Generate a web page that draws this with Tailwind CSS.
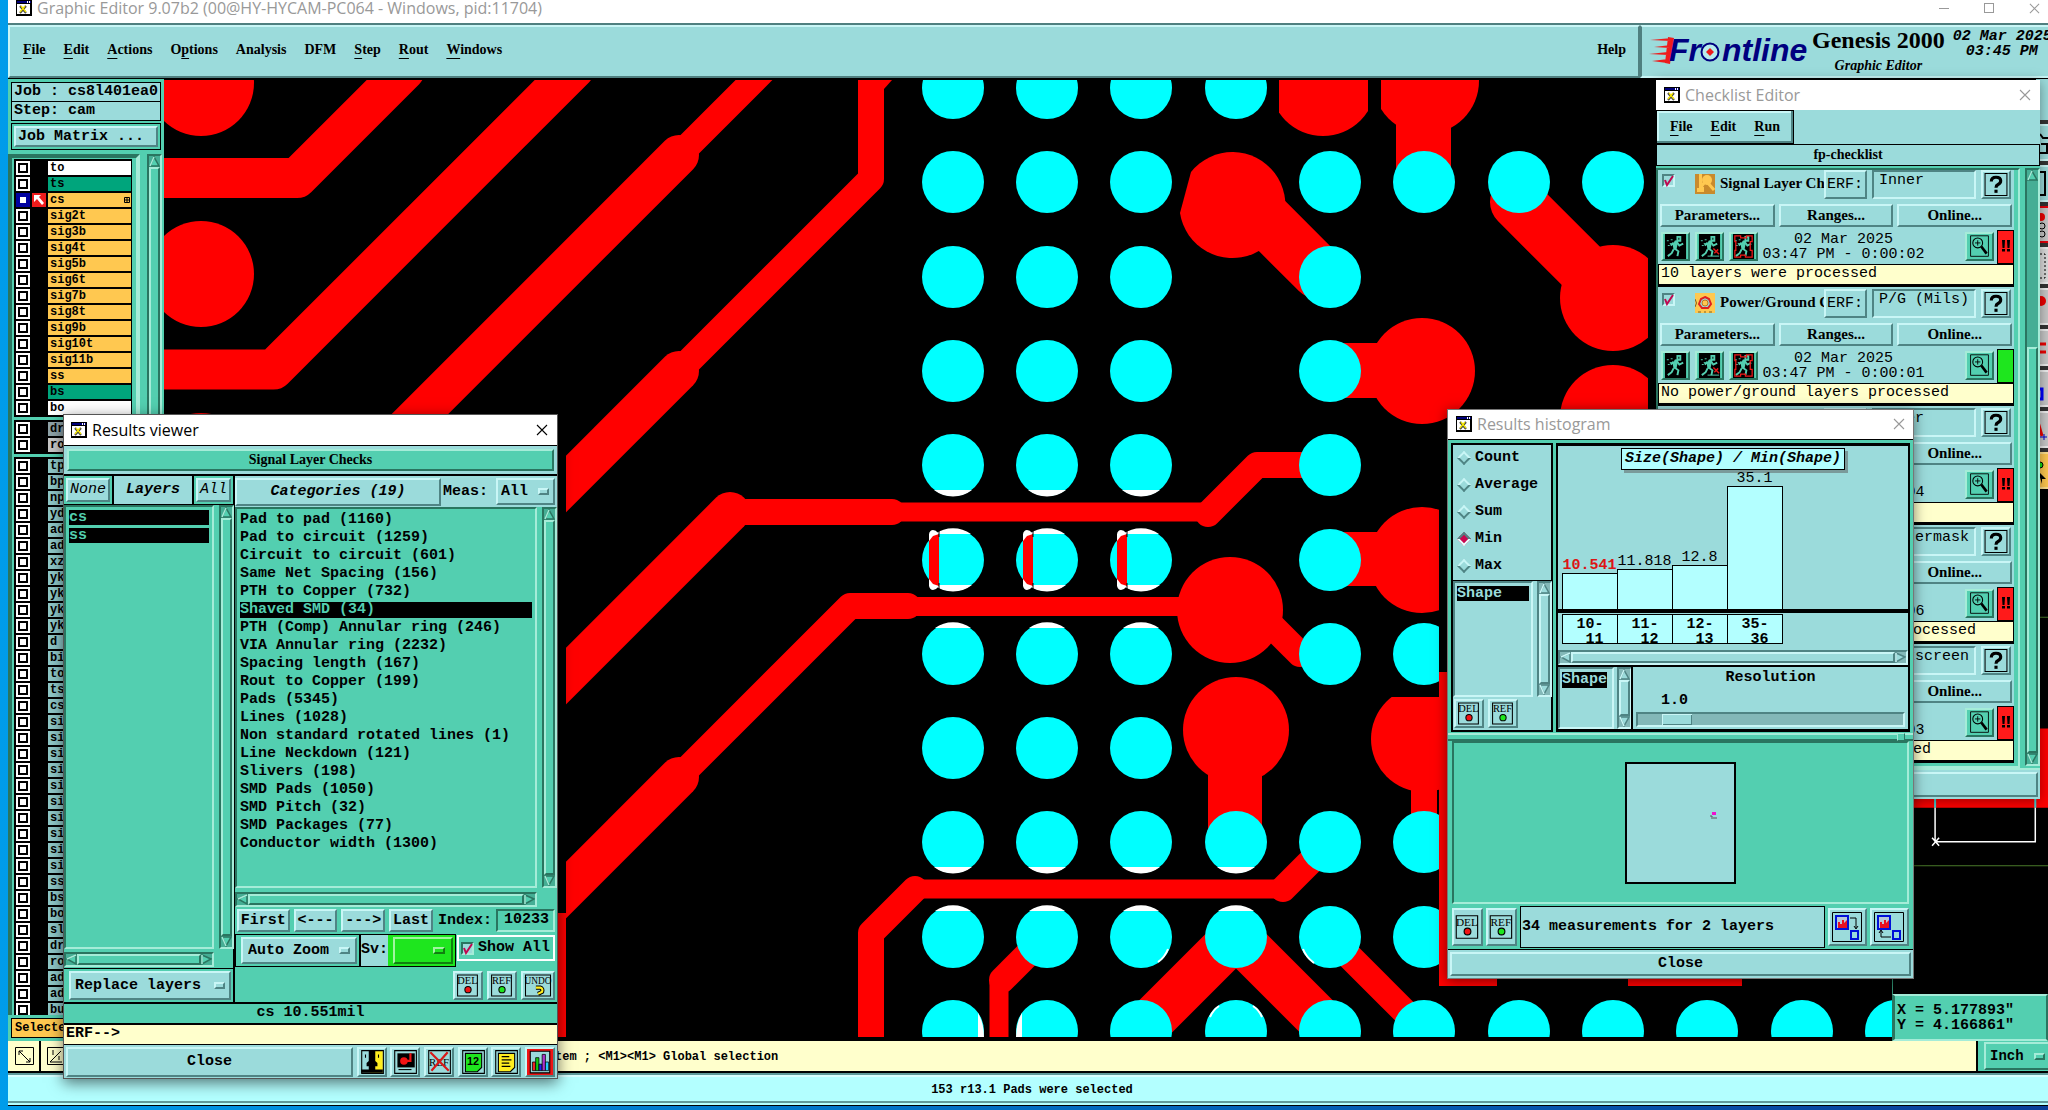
<!DOCTYPE html>
<html lang="en">
<head>
  <meta charset="UTF-8" />
  <meta name="viewport" content="width=device-width, initial-scale=1.0" />
  <title>Graphic Editor 9.07b2</title>
  <script src="https://cdn.jsdelivr.net/npm/@tailwindcss/browser@4"></script>
</head>
<body class="relative h-screen overflow-hidden bg-linear-to-r from-[#009cea] to-[#0a3f9a] font-['Liberation_Mono',monospace] text-[15px] leading-[18px] font-bold text-black">

  <!-- shared icons -->
  <svg class="hidden">
    <symbol id="app" viewBox="0 0 16 16">
      <path d="M0 0h16v16H0z" fill="#000"/><path d="M1 4h13v10H1z" fill="#fff"/><path d="M1 1h14v2H1z" fill="#00007b"/><path d="M11 1h1v2h-1zM13 1h1v2h-1z" fill="#fff"/>
      <path d="M4 6l6 7M10 6l-6 7" stroke="#444" stroke-width="2"/><path d="M5 6l5 6M9 6l-5 6" stroke="#f5e600" stroke-width="1.300"/>
    </symbol>
    <symbol id="close" viewBox="0 0 12 12"><path d="M1 1l10 10M11 1L1 11" fill="none" stroke="currentColor" stroke-width="1.100"/></symbol>
    <symbol id="del" viewBox="0 0 24 24">
      <path d="M2 2h19v20H2z" fill="none" stroke="#000"/>
      <text x="11.500" y="11" text-anchor="middle" font-family="Liberation Serif" font-size="10" font-weight="400">DEL</text>
      <circle cx="12" cy="16" r="3" fill="#f01414" stroke="#000"/>
    </symbol>
    <symbol id="ref" viewBox="0 0 24 24">
      <path d="M2 2h19v20H2z" fill="none" stroke="#000"/>
      <text x="11.500" y="11" text-anchor="middle" font-family="Liberation Serif" font-size="10" font-weight="400">REF</text>
      <circle cx="12" cy="16" r="3" fill="#1ee61e" stroke="#000"/>
    </symbol>
    <symbol id="undo" viewBox="0 0 28 24">
      <path d="M2 2h24v20H2z" fill="none" stroke="#000"/>
      <text x="14" y="11" text-anchor="middle" font-family="Liberation Serif" font-size="9" font-weight="400">UNDO</text>
      <path d="M12 14h4q3 1 2 4l-4 2" fill="none" stroke="#000" stroke-width="4"/><path d="M12 14h4q3 1 2 4l-4 2" fill="none" stroke="#ffee20" stroke-width="2"/>
    </symbol>
    <symbol id="person" viewBox="0 0 22 26">
      <path d="M13 3h3v4h-3zM12 7l-3 4 1 5M12 8l3 4 4-2M9 9L6 12M10 15l4 3-1 5M9 16l-2 4-4 3" fill="none" stroke="#53cfb0" stroke-width="2"/>
      <path d="M10 7h4l-2 9H9z" fill="#53cfb0"/><path d="M2 7h2M5 10h2M3 12h2M6 6h2" stroke="#53cfb0"/>
    </symbol>
    <symbol id="run" viewBox="0 0 22 26"><path d="M0 0h22v26H0z"/><use href="#person"/></symbol>
    <symbol id="run-sel" viewBox="0 0 22 26"><path d="M0 0h22v26H0z"/><use href="#person"/><path d="M9 23h12" stroke="#53cfb0"/><path d="M15 15l6 6M20 16l-4 4" stroke="#e01818" stroke-width="1.500"/></symbol>
    <symbol id="run-area" viewBox="0 0 22 26"><path d="M0 0h22v26H0z"/><use href="#person"/><path d="M2 2h6v2h6V2h6v6h-2v9h2v7h-7v-2H8v2H2v-7h1V8H2z" fill="none" stroke="#f01818" stroke-width="1.300"/></symbol>
    <symbol id="zoom" viewBox="0 0 24 28">
      <path d="M2 2h20v23H2z" fill="none" stroke="#000"/><circle cx="10" cy="10" r="5.500" fill="none" stroke="#000" stroke-width="1.200"/>
      <path d="M7 10h6M10 7v6" stroke="#000"/><path d="M14 14l6 8" stroke="#000" stroke-width="3"/>
    </symbol>
    <symbol id="help" viewBox="0 0 24 24">
      <path d="M1.500 1.500h21v21h-21z" fill="none" stroke="#000"/>
      <path d="M7.500 9q0-4 4.500-4t4.500 3.500q0 2.500-2.500 3.500-2 1-2 3" fill="none" stroke="#000" stroke-width="3"/><path d="M10.500 17h3v3h-3z"/>
    </symbol>
    <symbol id="signal" viewBox="0 0 20 20">
      <path d="M0 0h20v20H0z" fill="#c98a2c"/><path d="M4 0h3v13h2v5H2v-4h2z" fill="#ffc850"/><path d="M9 9l-3 4M13 9l6 7" stroke="#ffc850" stroke-width="3"/><circle cx="12" cy="6" r="5" fill="#ffc850"/>
    </symbol>
    <symbol id="ground" viewBox="0 0 20 20">
      <path d="M0 0h20v20H0z" fill="#ffc850"/><path d="M10 4l4 2 2 5-3 4H7l-3-4 2-5z" fill="#9bdbdb" stroke="#e02020" stroke-width="2"/><circle cx="10" cy="10" r="3" fill="#ffc850" stroke="#c07820"/>
      <path d="M0 6q3 4 0 8M3 19h3M14 19h3M9 19h2" fill="none" stroke="#806020"/>
    </symbol>
  </svg>

  <!-- main editor window -->
  <div class="flex h-full flex-col pb-[4px] pl-[8px]">
    <header class="flex h-[23px] shrink-0 items-center bg-white pr-[8px] pb-[7px] pl-[8px] font-['Open_Sans',sans-serif] text-[16px] font-normal text-[#999]">
      <svg class="size-[16px]"><use href="#app"/></svg>
      <h1 class="ml-[5px] flex-1">Graphic Editor 9.07b2 (00@HY-HYCAM-PC064 - Windows, pid:11704)</h1>
      <button aria-label="Minimize" class="mr-[35px] h-px w-[10px] bg-[#999]"></button>
      <button aria-label="Maximize" class="mr-[35px] size-[10px] border border-[#999]"></button>
      <button aria-label="Close"><svg class="size-[11px]"><use href="#close"/></svg></button>
    </header>

    <div class="flex h-[56px] shrink-0 border-t-2 border-b border-t-[#4f7f7f] border-b-black bg-[#9bdbdb] font-['Liberation_Serif',serif] text-[14px]">
      <nav class="flex flex-1 items-center gap-[18px] border-2 pr-[12px] pb-[3px] pl-[13px] [border-color:#c9f6f6_#4f7f7f_#4f7f7f_#c9f6f6]">
        <button><span class="underline underline-offset-4">F</span>ile</button>
        <button><span class="underline underline-offset-4">E</span>dit</button>
        <button><span class="underline underline-offset-4">A</span>ctions</button>
        <button>O<span class="underline underline-offset-4">p</span>tions</button>
        <button>Analysis</button>
        <button>DFM</button>
        <button><span class="underline underline-offset-4">S</span>tep</button>
        <button><span class="underline underline-offset-4">R</span>out</button>
        <button><span class="underline underline-offset-4">W</span>indows</button>
        <button class="ml-auto">Help</button>
      </nav>
      <div class="flex w-[408px] shrink-0 gap-[6px] overflow-hidden border-2 border-r-0 [border-color:#c9f6f6_#c9f6f6_#c9f6f6_#4f7f7f]">
        <svg class="ml-[6px] h-[50px] w-[160px] shrink-0" viewBox="0 0 160 50">
          <path d="M2 13l22-2-1 3zM6 20l17-2-1 3zM1 27l19-2v3zM4 34l16-2-1 4zM20 10l6 1-4 26-5-1z" fill="#ee1c1c"/>
          <g font-family="Liberation Sans" font-size="32" font-weight="700" font-style="italic" fill="#00007f">
            <text x="21" y="34">Fr</text><text x="74" y="34">ntline</text>
          </g>
          <circle cx="62" cy="25" r="8.500" fill="#b8ecec" stroke="#00007f" stroke-width="2"/><path d="M62 21l4 4-4 4-4-4z" fill="#ee1c1c"/>
        </svg>
        <div class="-ml-[2px] shrink-0 text-center">
          <p class="text-[24px] leading-[27px]">Genesis 2000</p>
          <p class="text-[14px] leading-[24px] italic">Graphic Editor</p>
        </div>
        <div class="shrink-0 pt-[2px] pl-[2px] font-['Liberation_Mono',monospace] text-[15px] leading-[15px] italic">
          <p>02 Mar 2025</p><p class="pl-[13px]">03:45 PM</p>
        </div>
      </div>
    </div>

    <div class="flex min-h-0 flex-1">
      <!-- layer list -->
      <aside class="flex w-[156px] shrink-0 flex-col bg-[#53cfb0] pt-[3px] whitespace-nowrap">
        <div class="mx-[3px] border border-black bg-[#9bdbdb] px-[2px]">Job : cs8l401ea0</div>
        <div class="mx-[3px] border border-t-0 border-black bg-[#9bdbdb] px-[2px]">Step: cam</div>
        <div class="mx-[3px] mt-[2px] border border-black p-[2px]">
          <button class="w-full border-2 bg-[#9bdbdb] px-[2px] text-left leading-[17px] [border-color:#c9f6f6_#4f8484_#4f8484_#c9f6f6]">Job Matrix ...</button>
        </div>
        <div class="mt-[4px] flex min-h-0 flex-1 pr-[2px]">
          <div class="mr-[7px] min-h-0 flex-1 overflow-hidden border-4 border-b-0 text-[12px] leading-[14px] [border-color:#2a7560_#a5ecd8_#a5ecd8_#2a7560]">
            <div id="layers" class="mr-[3px] space-y-[1px] pl-[1px]"></div>
          </div>
          <div data-vscroll="g" class="flex w-[15px]"></div>
        </div>
        <button class="mx-[3px] mt-[3px] mb-[3px] h-[20px] shrink-0 border border-black bg-[#ffc850] pl-[3px] text-left text-[12px]">Selected</button>
      </aside>

      <!-- board view -->
      <main class="relative min-w-0 flex-1 overflow-hidden border-b-2 border-black bg-black">
        <svg id="board" class="absolute inset-0 h-full w-full" viewBox="164 79 1728 960" preserveAspectRatio="xMinYMin slice">
          <defs>
            <clipPath id="pane"><path d="M164 80h1484v420h-209v490h460v47H164z"/></clipPath>
            <clipPath id="top4"><path d="M1279 80h89v60h-89z"/></clipPath>
            <clipPath id="top5"><path d="M1381 80h110v60h-110z"/></clipPath>
            <clipPath id="low5"><path d="M1360 697h90v110h-90z"/></clipPath>
          </defs>
          <g clip-path="url(#pane)">
            <g fill="none" stroke="#f00" stroke-linejoin="round" stroke-linecap="round">
              <g stroke-width="40">
                <path d="M150 178H297L405 70"/><path d="M150 369.500H273.500L575 68"/><path d="M300 534L679 155"/>
                <path d="M500 550L679 371"/><path d="M500 742L730 512"/><path d="M500 956L679 777"/>
              </g>
              <g stroke-width="26">
                <path d="M679 155L770 64"/><path d="M679 371L871 179V60"/><path d="M730 512H892"/><path d="M1208 514L1257 465H1320"/>
                <path d="M679 777L850 606H908"/><path d="M871 1060V933L915 889"/><path d="M1283 889L1330 842"/><path d="M1002 980L1045 937"/>
                <path d="M1330 937L1424 1031"/><path d="M1265 619L1300 654"/>
              </g>
              <g stroke-width="19"><path d="M892 512H1208"/><path d="M908 606.500H1200"/><path d="M915 889H1283"/><path d="M999 984V1060"/></g>
              <g stroke-width="46"><path d="M1236 936L1143 1029"/><path d="M1236 936L1329 1029"/></g>
              <g stroke-width="54"><path d="M1240 194L1318 272"/><path d="M1517 202L1605 290"/></g>
            </g>
            <g fill="#f00">
              <circle cx="201" cy="83" r="53"/><circle cx="201" cy="274" r="53"/><circle cx="201" cy="466" r="53"/>
              <circle cx="1323" cy="83" r="53" clip-path="url(#top4)"/><circle cx="1426" cy="81" r="53" clip-path="url(#top5)"/><path d="M1396 110h55v70h-55z"/>
              <path d="M1191 172A53 53 0 1 1 1180 213Z"/>
              <circle cx="1422" cy="371" r="53"/><path d="M1340 343h50v55h-50z"/>
              <circle cx="1613" cy="298" r="53"/><circle cx="1613" cy="418" r="53"/>
              <circle cx="1422" cy="560" r="53"/><path d="M1340 532h50v54h-50z"/>
              <circle cx="1230" cy="610" r="53"/><circle cx="1236" cy="730" r="53"/><path d="M1208 765h54v70h-54z"/>
              <circle cx="1424" cy="739" r="53" clip-path="url(#low5)"/><path d="M1411 780h26v50h-26z"/>
              <path d="M884 80h8l-8 9z"/>
            </g>
            <path d="M540 440h26v473h-26z"/><path d="M540 913h26v130h-26z" fill="#f00"/>
            <g id="pads"></g>
          </g>
          <path d="M1439 672h12v300h46v14h-58zM1628 960h114v26h-114z" fill="#f00"/>
        </svg>
      </main>

      <!-- tool column, overview, coordinates -->
      <aside class="flex w-[156px] shrink-0 flex-col bg-black">
        <div class="ml-auto flex h-[410px] w-[12px] flex-col gap-[4px] bg-[#333]">
          <div class="h-[41px] bg-[#9bdbdb]"></div>
          <button aria-label="Select" class="flex-1 border-y-2 bg-[#9bdbdb] [border-color:#c9f6f6_#4f8484]"><svg class="h-[24px] w-[12px]" viewBox="0 0 12 24"><path d="M4 3l3 4h5M5 13h6v9H4" fill="none" stroke="#000" stroke-width="2"/></svg></button>
          <button aria-label="Frame" class="flex-1 border-y-2 bg-[#9bdbdb] [border-color:#c9f6f6_#4f8484]"><svg class="h-[28px] w-[12px]" viewBox="0 0 12 28"><path d="M0 2h9v23H0" fill="none" stroke="#000" stroke-width="2"/></svg></button>
          <button aria-label="Signals" class="flex-1 border-y-2 border-red-600 bg-[#c8c8c8]"><svg class="h-[28px] w-[12px]" viewBox="0 0 12 28"><circle cx="5" cy="6" r="4" fill="#e00"/><circle cx="6" cy="15" r="3" fill="none" stroke="#000"/><circle cx="6" cy="23" r="3" fill="none" stroke="#000"/></svg></button>
          <button aria-label="Area" class="flex-1 border-y-2 border-[#eee] bg-[#ddd]"><svg class="h-[28px] w-[12px]" viewBox="0 0 12 28"><path d="M0 2h9v24H0" fill="none" stroke="#000" stroke-dasharray="2"/></svg></button>
          <button aria-label="Pad" class="flex-1 border-y-2 border-[#eee] bg-[#c8c8c8]"><svg class="h-[28px] w-[12px]" viewBox="0 0 12 28"><circle cx="5" cy="8" r="5" fill="#e00"/></svg></button>
          <button aria-label="Line" class="flex-1 border-y-2 border-[#eee] bg-[#c8c8c8]"><svg class="h-[28px] w-[12px]" viewBox="0 0 12 28"><path d="M2 10h8M2 18h8" stroke="#e00" stroke-width="3"/></svg></button>
          <button aria-label="Surface" class="flex-1 border-y-2 border-[#eee] bg-[#c8c8c8]"><svg class="h-[28px] w-[12px]" viewBox="0 0 12 28"><path d="M0 14h6v10H0" fill="none" stroke="#00f" stroke-width="3"/></svg></button>
          <button aria-label="Arc" class="flex-1 border-y-2 border-[#eee] bg-[#c8c8c8]"><svg class="h-[28px] w-[12px]" viewBox="0 0 12 28"><path d="M2 6l4 14" stroke="#e00" stroke-width="3"/><path d="M1 21h10M8 18v6" stroke="#00c"/></svg></button>
          <button aria-label="Pointer" class="flex-1 border-y-2 border-[#ffe090] bg-[#ffc850]"><svg class="h-[28px] w-[12px]" viewBox="0 0 12 28"><circle cx="4" cy="8" r="3" fill="#1d1" stroke="#000"/><path d="M2 14l8 8H6v5z"/></svg></button>
        </div>
        <svg class="min-h-0 w-full flex-1" viewBox="1892 489 156 504" preserveAspectRatio="xMinYMin slice">
          <path d="M1892 728h156v79h-156z" fill="#f00"/>
          <path d="M1935 795v12M2035 795v12" stroke="#4cc" stroke-width="2"/>
          <path d="M1935 807v34h100v-34M1932 837l7 8M1939 837l-7 8" fill="none" stroke="#fff" stroke-width="1.500"/>
          <path d="M1892 617h156M1914 865h134" stroke="#4a7a2a"/><path d="M1892.500 489v504" stroke="#2f8f70"/>
        </svg>
        <div class="h-[47px] border-2 border-l-[3px] bg-[#53cfb0] pt-[7px] pl-[2px] leading-[15px] [border-color:#a5ecd8_#2a7560_#a5ecd8_#2a7560]">
          <p>X = 5.177893"</p><p>Y = 4.166861"</p>
        </div>
      </aside>
    </div>

    <!-- prompt and status lines -->
    <div class="flex h-[32px] shrink-0 border-b-2 border-black bg-[#ffffcc] text-[12px]">
      <button aria-label="Measure" class="w-[33px] border-r-2 border-black pl-[2px]"><svg class="h-[28px] w-[29px]" viewBox="0 0 29 28" fill="none" stroke="#000"><path d="M5.500 5.500h18v17h-18zM9 9l11 11M9 13V9h4M20 16v4h-4"/></svg></button>
      <button aria-label="Angle" class="w-[33px] border-r-2 border-black pl-[2px]"><svg class="h-[28px] w-[29px]" viewBox="0 0 29 28" fill="none" stroke="#000"><path d="M4.500 5.500h19v17h-19zM7 20L18 9M7 20h12M10 8v5M16 14v4"/></svg></button>
      <p class="flex-1 self-center pt-px pl-[373px] whitespace-pre">&lt;M1&gt; - Select item ; &lt;M1&gt;&lt;M1&gt; Global selection</p>
      <label class="flex w-[72px] items-center overflow-hidden border-l-2 border-black bg-[#53cfb0] pl-[6px] text-[14px]">
        <span class="flex h-[28px] w-[80px] shrink-0 items-center border-2 border-r-0 pl-[4px] [border-color:#a5ecd8_#2a7560_#2a7560_#a5ecd8]">
          <select aria-label="Units" class="w-[44px] appearance-none outline-none"><option>Inch</option></select>
          <span class="h-[7px] w-[11px] border-2 [border-color:#a5ecd8_#2a7560_#2a7560_#a5ecd8]"></span>
        </span>
      </label>
    </div>
    <footer class="h-[33px] shrink-0 border-t-2 border-b border-t-[#5f9a9a] border-b-black bg-[#b3ffff]">
      <div class="h-[28px] border-y-2 pt-[4px] pl-[8px] text-center text-[12px] [border-color:#d8ffff_#5f9a9a_#5f9a9a]">153 r13.1 Pads were selected</div>
    </footer>
  </div>

  <!-- results viewer -->
  <section class="absolute top-[414px] left-[63px] flex h-[665px] w-[495px] flex-col border border-[#555] bg-black shadow-[0_4px_14px_rgba(0,0,0,.55)]">
    <header class="flex h-[30px] shrink-0 items-center bg-white pr-[9px] pb-px pl-[7px] font-['Open_Sans',sans-serif] text-[16px] font-normal">
      <svg class="size-[16px]"><use href="#app"/></svg><h2 class="ml-[5px] flex-1">Results viewer</h2>
      <button aria-label="Close window"><svg class="size-[12px]"><use href="#close"/></svg></button>
    </header>
    <div class="mt-px h-[28px] shrink-0 bg-[#9bdbdb] p-[3px] font-['Liberation_Serif',serif] text-[14px]">
      <div class="h-full border-2 bg-[#53cfb0] text-center [border-color:#a5ecd8_#2a7560_#2a7560_#a5ecd8]">Signal Layer Checks</div>
    </div>
    <div class="mt-[2px] flex min-h-0 flex-1 gap-[2px]">
      <div class="flex w-[169px] flex-col bg-[#53cfb0]">
        <div class="flex h-[29px] shrink-0 border-b border-black italic">
          <button class="m-[2px] w-[44px] border-2 bg-[#9bdbdb] font-normal [border-color:#c9f6f6_#4f8484_#4f8484_#c9f6f6]">None</button>
          <div class="flex-1 border-x-2 border-black bg-[#9bdbdb] pt-[5px] text-center">Layers</div>
          <button class="m-[2px] w-[35px] border-2 bg-[#9bdbdb] font-normal [border-color:#c9f6f6_#4f8484_#4f8484_#c9f6f6]">All</button>
        </div>
        <div class="flex min-h-0 flex-1">
          <ul class="mr-[5px] flex-1 space-y-[3px] border-2 px-[3px] pt-[3px] leading-[15px] text-[#53cfb0] [border-color:#2a7560_#a5ecd8_#a5ecd8_#2a7560]">
            <li class="bg-black">cs</li><li class="bg-black">ss</li>
          </ul>
          <div data-vscroll="g" class="flex w-[14px]"></div>
        </div>
        <div data-hscroll="g" class="mt-[3px] mr-[19px] flex h-[15px]"></div>
        <div class="mt-px shrink-0 border-t border-black p-[2px] pl-[5px]">
          <label class="flex h-[29px] items-center border-2 bg-[#9bdbdb] pl-[4px] [border-color:#c9f6f6_#4f8484_#4f8484_#c9f6f6]">
            <select aria-label="Layer action" class="min-w-0 flex-1 appearance-none outline-none"><option>Replace layers</option></select>
            <span class="mr-[4px] h-[7px] w-[11px] border-2 [border-color:#c9f6f6_#4f8484_#4f8484_#c9f6f6]"></span>
          </label>
        </div>
      </div>
      <div class="flex min-w-0 flex-1 flex-col bg-[#53cfb0]">
        <div class="flex h-[31px] shrink-0 items-center bg-[#9bdbdb]">
          <button class="h-[28px] w-[206px] border-2 italic [border-color:#c9f6f6_#4f8484_#4f8484_#c9f6f6]">Categories (19)</button>
          <label class="ml-[2px]" for="meas">Meas:</label>
          <span class="mr-[2px] ml-auto flex h-[27px] w-[59px] items-center border-2 pl-[3px] [border-color:#c9f6f6_#4f8484_#4f8484_#c9f6f6]">
            <select id="meas" class="min-w-0 flex-1 appearance-none outline-none"><option>All</option></select>
            <span class="mr-[4px] h-[7px] w-[11px] border-2 [border-color:#c9f6f6_#4f8484_#4f8484_#c9f6f6]"></span>
          </span>
        </div>
        <div class="flex min-h-0 flex-1">
          <ul id="categories" class="mr-[5px] flex-1 border-2 px-[3px] pt-[2px] whitespace-nowrap [border-color:#2a7560_#a5ecd8_#a5ecd8_#2a7560]"></ul>
          <div data-vscroll="g" class="mr-[1px] flex w-[14px]"></div>
        </div>
        <div data-hscroll="g" class="mt-[4px] mr-[20px] flex h-[15px]"></div>
        <div class="flex h-[27px] shrink-0 items-center gap-[4px] px-[2px]">
          <button class="h-[23px] w-[53px] border-2 bg-[#9bdbdb] [border-color:#c9f6f6_#4f8484_#4f8484_#c9f6f6]">First</button>
          <button class="h-[23px] w-[44px] border-2 bg-[#9bdbdb] [border-color:#c9f6f6_#4f8484_#4f8484_#c9f6f6]">&lt;---</button>
          <button class="h-[23px] w-[44px] border-2 bg-[#9bdbdb] [border-color:#c9f6f6_#4f8484_#4f8484_#c9f6f6]">---&gt;</button>
          <button class="h-[23px] w-[44px] border-2 bg-[#9bdbdb] [border-color:#c9f6f6_#4f8484_#4f8484_#c9f6f6]">Last</button>
          <label for="index" class="pl-px">Index:</label>
          <input id="index" value="10233" class="ml-auto h-[23px] w-[59px] border-2 pb-[2px] pl-[6px] outline-none [border-color:#2a7560_#a5ecd8_#a5ecd8_#2a7560]" />
        </div>
        <div class="flex h-[34px] shrink-0 items-start">
          <div class="flex h-[33px] border border-black">
            <div class="p-[2px] pl-[5px]">
              <label class="flex h-[27px] w-[116px] items-center border-2 bg-[#9bdbdb] pl-[5px] [border-color:#c9f6f6_#4f8484_#4f8484_#c9f6f6]">
                <select aria-label="Zoom" class="min-w-0 flex-1 appearance-none outline-none"><option>Auto Zoom</option></select>
                <span class="mr-[5px] h-[7px] w-[11px] border-2 [border-color:#c9f6f6_#4f8484_#4f8484_#c9f6f6]"></span>
              </label>
            </div>
            <label for="sv" class="border-l-2 border-black bg-[#9bdbdb] pt-[6px]">Sv:</label>
            <div class="bg-[#1ee61e] p-[2px] pl-[5px]">
              <div class="flex h-[27px] w-[60px] items-center border-2 [border-color:#a0f5a0_#108010_#108010_#a0f5a0]">
                <select id="sv" class="w-[38px] appearance-none outline-none"><option></option></select>
                <span class="h-[7px] w-[12px] border-2 [border-color:#a0f5a0_#108010_#108010_#a0f5a0]"></span>
              </div>
            </div>
          </div>
          <label class="mt-px ml-px flex h-[26px] items-center gap-[4px] border-2 border-white pr-[3px] pl-[2px] whitespace-nowrap">
            <span class="relative size-[13px] border-2 bg-[#9bdbdb] [border-color:#2a7560_#a5ecd8_#a5ecd8_#2a7560]">
              <input type="checkbox" checked class="peer absolute inset-0 appearance-none" />
              <svg class="absolute -top-[2px] -left-[2px] hidden size-[13px] peer-checked:block" viewBox="0 0 13 13"><path d="M3 6l2 5 6-9" fill="none" stroke="#c00850" stroke-width="2"/></svg>
            </span>Show All
          </label>
        </div>
        <div class="flex h-[34px] shrink-0 items-center justify-end gap-[4px] pr-[2px]">
          <button aria-label="Delete" class="h-[29px] w-[30px] border-2 bg-[#9bdbdb] [border-color:#c9f6f6_#4f8484_#4f8484_#c9f6f6]"><svg class="size-full"><use href="#del"/></svg></button>
          <button aria-label="Reference" class="h-[29px] w-[30px] border-2 bg-[#9bdbdb] [border-color:#c9f6f6_#4f8484_#4f8484_#c9f6f6]"><svg class="size-full"><use href="#ref"/></svg></button>
          <button aria-label="Undo" class="h-[29px] w-[34px] border-2 bg-[#9bdbdb] [border-color:#c9f6f6_#4f8484_#4f8484_#c9f6f6]"><svg class="size-full"><use href="#undo"/></svg></button>
        </div>
      </div>
    </div>
    <div class="mt-[2px] h-[19px] shrink-0 bg-[#53cfb0] text-center">cs 10.551mil</div>
    <label class="mt-[2px] flex h-[19px] shrink-0 bg-[#ffffcc] pl-[2px]">ERF--&gt;<input class="min-w-0 flex-1 outline-none" /></label>
    <div class="mt-px flex h-[33px] shrink-0 items-center justify-between bg-[#9bdbdb] px-[2px]">
      <button class="h-[30px] w-[287px] border-2 [border-color:#c9f6f6_#4f8484_#4f8484_#c9f6f6]">Close</button>
      <button aria-label="Compare" class="h-[30px] w-[30px] border-2 [border-color:#c9f6f6_#4f8484_#4f8484_#c9f6f6]"><svg class="size-full" viewBox="0 0 24 24"><path d="M2 1h20v21H2z" fill="#ffee20"/><path d="M2 1h8v21H2z" fill="#9bdbdb"/><path d="M9 1h6v10l2 2v3h-2v3h7v3H2v-3h7v-3H7v-3l2-2z"/><path d="M2.500 1.500h20v21h-20z" fill="none" stroke="#000"/><path d="M6 5v3M18 5v3" stroke="#000"/></svg></button>
      <button aria-label="Record" class="h-[30px] w-[30px] border-2 [border-color:#c9f6f6_#4f8484_#4f8484_#c9f6f6]"><svg class="size-full" viewBox="0 0 24 24"><path d="M2.500 1.500h20v21h-20z" fill="none" stroke="#000"/><path d="M5 4h16v13H5z"/><circle cx="11" cy="11" r="3.500" fill="#f01414"/><path d="M11 11h6V4" fill="none" stroke="#f01414" stroke-width="2"/><path d="M6 19h12" stroke="#000"/></svg></button>
      <button aria-label="Clear reference" class="h-[30px] w-[30px] border-2 [border-color:#c9f6f6_#4f8484_#4f8484_#c9f6f6]"><svg class="size-full" viewBox="0 0 24 24"><path d="M2.500 1.500h20v21h-20z" fill="none" stroke="#000"/><text x="12" y="16" text-anchor="middle" font-family="Liberation Serif" font-size="10" font-weight="400">REF</text><path d="M4 3l17 17M20 3L5 20" stroke="#d81818" stroke-width="2"/></svg></button>
      <button aria-label="Numbers" class="h-[30px] w-[30px] border-2 [border-color:#c9f6f6_#4f8484_#4f8484_#c9f6f6]"><svg class="size-full" viewBox="0 0 24 24"><path d="M2.500 1.500h20v21h-20z" fill="none" stroke="#000"/><path d="M5 4h15v13l-4 4H5z" fill="#1ee61e" stroke="#000"/><text x="12" y="15" text-anchor="middle" font-family="Liberation Sans" font-size="10">12</text></svg></button>
      <button aria-label="Report" class="h-[30px] w-[30px] border-2 [border-color:#c9f6f6_#4f8484_#4f8484_#c9f6f6]"><svg class="size-full" viewBox="0 0 24 24"><path d="M2.500 1.500h20v21h-20z" fill="none" stroke="#000"/><path d="M5 4h15v13l-4 4H5z" fill="#ffee20" stroke="#000"/><path d="M8 7h7M8 10h9M8 13h7M8 16h8" stroke="#000"/></svg></button>
      <button aria-label="Histogram" class="h-[30px] w-[30px] border-2 bg-[#f01414] [border-color:#c9f6f6_#4f8484_#4f8484_#c9f6f6]"><svg class="size-full" viewBox="0 0 24 24"><path d="M3 2h18v20H3z" fill="#9bdbdb" stroke="#000"/><g stroke="#000" stroke-width=".7"><path d="M5 12h3v8H5z" fill="#e22"/><path d="M8 8h3v12H8z" fill="#1c1"/><path d="M11 14h3v6h-3z" fill="#22e"/><path d="M14 5h3v15h-3z" fill="#a3c"/><path d="M17 12h3v8h-3z" fill="#2cf"/></g></svg></button>
    </div>
  </section>

  <!-- checklist editor -->
  <section class="absolute top-[80px] left-[1656px] flex h-[719px] w-[384px] flex-col bg-[#9bdbdb] shadow-[0_2px_12px_rgba(0,0,0,.4)]">
    <header class="flex h-[30px] shrink-0 items-center bg-white pr-[9px] pb-px pl-[8px] font-['Open_Sans',sans-serif] text-[16px] font-normal text-[#999]">
      <svg class="size-[16px]"><use href="#app"/></svg><h2 class="ml-[5px] flex-1">Checklist Editor</h2>
      <button aria-label="Close window"><svg class="size-[12px]"><use href="#close"/></svg></button>
    </header>
    <div class="h-[35px] shrink-0 border-b border-black font-['Liberation_Serif',serif] text-[14px]">
      <nav class="flex h-[34px] w-[138px] items-center gap-[18px] border border-black bg-[#9bdbdb] pl-[13px] shadow-[inset_-2px_-2px_#4f8484,inset_2px_2px_#c9f6f6]">
        <button><span class="underline underline-offset-4">F</span>ile</button><button><span class="underline underline-offset-4">E</span>dit</button><button><span class="underline underline-offset-4">R</span>un</button>
      </nav>
    </div>
    <h3 class="h-[21px] shrink-0 border border-t-0 border-black text-center font-['Liberation_Serif',serif] text-[14px] leading-[20px]">fp-checklist</h3>
    <div class="flex min-h-0 flex-1 bg-[#53cfb0] pt-[2px]">
      <div class="mr-[5px] flex w-[364px] flex-col overflow-hidden border-2 [border-color:#2a7560_#a5ecd8_#a5ecd8_#2a7560]">
        <div id="checks" class="-mt-[2px] mr-[4px] font-normal"></div>
      </div>
      <div data-vscroll="half" class="mb-[2px] flex w-[14px]"></div>
    </div>
    <div class="shrink-0 border-t-2 border-[#a5ecd8] p-[2px]"><button aria-label="Close checklist" class="block h-[25px] w-full border-2 [border-color:#c9f6f6_#4f8484_#4f8484_#c9f6f6]"></button></div>
  </section>

  <!-- results histogram -->
  <section class="absolute top-[409px] left-[1447px] flex h-[570px] w-[467px] flex-col border border-[#777] bg-[#53cfb0] shadow-[0_2px_12px_rgba(0,0,0,.5)]">
    <header class="flex h-[30px] shrink-0 items-center border-b border-black bg-white pr-[8px] pb-px pl-[8px] font-['Open_Sans',sans-serif] text-[16px] font-normal text-[#999]">
      <svg class="size-[16px]"><use href="#app"/></svg><h2 class="ml-[5px] flex-1">Results histogram</h2>
      <button aria-label="Close window"><svg class="size-[12px]"><use href="#close"/></svg></button>
    </header>
    <div class="mt-[3px] flex h-[289px] shrink-0 gap-[3px] px-[3px]">
      <div class="flex w-[102px] shrink-0 flex-col border-2 border-black bg-[#9bdbdb]">
        <fieldset class="flex h-[136px] shrink-0 flex-col gap-[9px] border-b border-black pt-[4px] pl-[6px]">
          <label class="flex items-center gap-[6px]"><input type="radio" name="stat" class="size-[10px] rotate-45 appearance-none border-2 [border-color:#c9f6f6_#4f8484_#4f8484_#c9f6f6] checked:bg-[#c80850]" />Count</label>
          <label class="flex items-center gap-[6px]"><input type="radio" name="stat" class="size-[10px] rotate-45 appearance-none border-2 [border-color:#c9f6f6_#4f8484_#4f8484_#c9f6f6] checked:bg-[#c80850]" />Average</label>
          <label class="flex items-center gap-[6px]"><input type="radio" name="stat" class="size-[10px] rotate-45 appearance-none border-2 [border-color:#c9f6f6_#4f8484_#4f8484_#c9f6f6] checked:bg-[#c80850]" />Sum</label>
          <label class="flex items-center gap-[6px]"><input type="radio" name="stat" checked class="size-[10px] rotate-45 appearance-none border-2 [border-color:#4f8484_#e9ffff_#e9ffff_#4f8484] checked:bg-[#c80850]" />Min</label>
          <label class="flex items-center gap-[6px]"><input type="radio" name="stat" class="size-[10px] rotate-45 appearance-none border-2 [border-color:#c9f6f6_#4f8484_#4f8484_#c9f6f6] checked:bg-[#c80850]" />Max</label>
        </fieldset>
        <div class="flex h-[116px] shrink-0">
          <div class="mr-[4px] flex-1 border-2 px-[2px] pt-[3px] [border-color:#4f8484_#c9f6f6_#c9f6f6_#4f8484]"><p class="bg-black leading-[15px] text-[#9bdbdb]">Shape</p></div>
          <div data-vscroll="t" class="flex w-[14px]"></div>
        </div>
        <div class="flex flex-1 items-center gap-[4px] pl-px">
          <button aria-label="Delete" class="h-[29px] w-[30px] border-2 [border-color:#c9f6f6_#4f8484_#4f8484_#c9f6f6]"><svg class="size-full"><use href="#del"/></svg></button>
          <button aria-label="Reference" class="h-[29px] w-[30px] border-2 [border-color:#c9f6f6_#4f8484_#4f8484_#c9f6f6]"><svg class="size-full"><use href="#ref"/></svg></button>
        </div>
      </div>
      <div class="flex min-w-0 flex-1 flex-col border-2 border-t-[3px] border-b-[3px] border-black bg-[#9bdbdb]">
        <div class="flex h-[167px] shrink-0 flex-col border-b-4 border-black">
          <h3 class="mt-[2px] self-center border border-black bg-[#b3ffff] px-[3px] leading-[20px] italic shadow-[3px_3px_#7a9a9a]">Size(Shape) / Min(Shape)</h3>
          <div id="bars" class="flex min-h-0 flex-1 items-end pl-[4px]"></div>
        </div>
        <div id="bins" class="mt-px flex h-[30px] shrink-0 pl-[4px] text-center leading-[15px] whitespace-pre"></div>
        <div data-hscroll="t" class="mt-[6px] flex h-[15px] shrink-0"></div>
        <div class="flex min-h-0 flex-1 border-t-2 border-black">
          <div class="w-[56px] border-2 px-[2px] pt-[3px] [border-color:#4f8484_#c9f6f6_#c9f6f6_#4f8484]"><p class="w-[45px] bg-black leading-[16px] text-[#9bdbdb]">Shape</p></div>
          <div data-vscroll="t" class="ml-[3px] flex w-[14px]"></div>
          <div class="flex flex-1 flex-col border-l-2 border-black px-[3px]">
            <label for="res" class="mt-[2px] text-center">Resolution</label>
            <output for="res" class="mt-[5px] ml-[25px] leading-[18px]">1.0</output>
            <input id="res" type="range" value="10" class="mt-[2px] h-[15px] w-full appearance-none border-2 bg-[#83b8b8] [border-color:#4f8484_#c9f6f6_#c9f6f6_#4f8484] [&::-webkit-slider-thumb]:h-[11px] [&::-webkit-slider-thumb]:w-[30px] [&::-webkit-slider-thumb]:appearance-none [&::-webkit-slider-thumb]:bg-[#9bdbdb] [&::-webkit-slider-thumb]:shadow-[inset_1px_1px_#c9f6f6,inset_-1px_-1px_#4f8484]" />
          </div>
        </div>
      </div>
    </div>
    <div class="mt-[1px] flex h-[8px] shrink-0 items-center border-t-2 border-b-2 [border-color:#a5ecd8_#2a7560_#2a7560]">
      <span class="mr-[8px] ml-auto size-[8px] shrink-0 border bg-[#53cfb0] [border-color:#a5ecd8_#2a7560_#2a7560_#a5ecd8]"></span>
    </div>
    <div class="mx-[4px] flex min-h-0 flex-1 items-center justify-center border-2 [border-color:#2a7560_#a5ecd8_#a5ecd8_#2a7560]">
      <svg class="h-[122px] w-[111px]" viewBox="0 0 111 122"><path d="M1 1h109v120H1z" fill="#9bdbdb" stroke="#000" stroke-width="2"/><path d="M87 50h4v3h-4z" fill="#f010d0"/><path d="M85 54h2v3M88 56h4" fill="none" stroke="#555"/></svg>
    </div>
    <div class="flex h-[46px] shrink-0 items-center gap-[3px] border-b border-black px-[4px]">
      <button aria-label="Delete" class="h-[38px] w-[31px] border-2 bg-[#9bdbdb] [border-color:#c9f6f6_#4f8484_#4f8484_#c9f6f6]"><svg class="size-full"><use href="#del"/></svg></button>
      <button aria-label="Reference" class="h-[38px] w-[31px] border-2 bg-[#9bdbdb] [border-color:#c9f6f6_#4f8484_#4f8484_#c9f6f6]"><svg class="size-full"><use href="#ref"/></svg></button>
      <p class="flex h-[42px] flex-1 items-center border border-black bg-[#9bdbdb] pl-px">34 measurements for 2 layers</p>
      <button aria-label="Next bin" class="h-[38px] w-[39px] border-2 bg-[#9bdbdb] [border-color:#c9f6f6_#4f8484_#4f8484_#c9f6f6]"><svg class="size-full" viewBox="0 0 35 34"><path d="M2.500 2.500h29v29h-29z" fill="none" stroke="#000"/><path d="M6 6h12v13H6z" fill="#b8c8d8" stroke="#0010d8" stroke-width="2"/><path d="M8 12h2v2h2v-4h2v3l3-3v8H8z" fill="#e81020"/><path d="M20 8h6v10M24 16l2 3 2-3" fill="none" stroke="#000"/><path d="M21 21h7v8h-7z" fill="none" stroke="#0010d8" stroke-width="2"/></svg></button>
      <button aria-label="Previous bin" class="h-[38px] w-[39px] border-2 bg-[#9bdbdb] [border-color:#c9f6f6_#4f8484_#4f8484_#c9f6f6]"><svg class="size-full" viewBox="0 0 35 34"><path d="M2.500 2.500h29v29h-29z" fill="none" stroke="#000"/><path d="M6 6h12v13H6z" fill="#b8c8d8" stroke="#0010d8" stroke-width="2"/><path d="M8 12h2v2h2v-4h2v3l3-3v8H8z" fill="#e81020"/><path d="M19 27H9v-6M7 23l2-3 2 3" fill="none" stroke="#000"/><path d="M21 21h7v8h-7z" fill="none" stroke="#0010d8" stroke-width="2"/></svg></button>
    </div>
    <div class="shrink-0 bg-[#9bdbdb] p-[2px]"><button class="block h-[24px] w-full border-2 leading-[20px] [border-color:#c9f6f6_#4f8484_#4f8484_#c9f6f6]">Close</button></div>
  </section>

  <script>
    // scrollbars: g = green, t = teal, half = green with the thumb in the lower part
    const tone = (k) => k === "t"
      ? { trough: "border-2 bg-[#83b8b8] [border-color:#4f8484_#c9f6f6_#c9f6f6_#4f8484]", thumb: "border-2 bg-[#9bdbdb] [border-color:#c9f6f6_#4f8484_#4f8484_#c9f6f6]", c: "#9bdbdb", hi: "#c9f6f6", lo: "#4f8484" }
      : { trough: "border-2 bg-[#45ae95] [border-color:#2a7560_#a5ecd8_#a5ecd8_#2a7560]", thumb: "border-2 bg-[#53cfb0] [border-color:#a5ecd8_#2a7560_#2a7560_#a5ecd8]", c: "#53cfb0", hi: "#a5ecd8", lo: "#2a7560" };

    const arrow = (d, t) => `<button aria-label="Scroll" class="size-[11px] shrink-0"><svg class="size-[11px]" viewBox="0 0 11 11"><path d="${d}" fill="${t.c}" stroke="${t.lo}" stroke-width="1.500"/><path d="${d.split("L").slice(0, 2).join("L")}" stroke="${t.hi}" stroke-width="1.500"/></svg></button>`;

    document.querySelectorAll("[data-vscroll]").forEach((el) => {
      const t = tone(el.dataset.vscroll);
      const gap = el.dataset.vscroll === "half" ? '<div class="h-[166px] shrink-0"></div>' : "";
      el.innerHTML = `<div class="flex flex-1 flex-col ${t.trough}">${arrow("M1 10L5 1L10 10Z", t)}${gap}<div class="flex-1 ${t.thumb}"></div>${arrow("M5 10L1 1L10 1Z", t)}</div>`;
    });
    document.querySelectorAll("[data-hscroll]").forEach((el) => {
      const t = tone(el.dataset.hscroll);
      el.innerHTML = `<div class="flex flex-1 ${t.trough}">${arrow("M10 1L1 5L10 10Z", t)}<div class="flex-1 ${t.thumb}"></div>${arrow("M1 10L1 1L10 5Z", t)}</div>`;
    });

    // layer list
    const white = "bg-white", green = "bg-[#00a57c]", amber = "bg-[#ffc850]", grey = "bg-[#8fa3a8]", teal = "bg-[#8fc8c8]";
    const groups = [
      [["to", white], ["ts", green], ["cs", amber], ...["sig2t", "sig3b", "sig4t", "sig5b", "sig6t", "sig7b", "sig8t", "sig9b", "sig10t", "sig11b", "ss"].map((n) => [n, amber]), ["bs", green], ["bo", white]],
      [["dr", grey], ["ro", "bg-[#c8c8c8]"]],
      ["tp", "bp", "np", "yd", "ad", "ad", "xz", "yk", "yk", "yk", "yk", "d", "bi", "to", "ts", "cs", ...Array(10).fill("si"), "ss", "bs", "bo", "sl", "dr", "ro", "ad", "ad", "bu"].map((n) => [n, teal]),
    ];
    document.getElementById("layers").innerHTML = groups.map((rows) => `
      <div class="border border-[#53cfb0] bg-black py-px pr-px pl-[2px]">${rows.map(([name, bg]) => {
        const active = name === "cs" && bg === amber;
        return `<label class="flex h-[16px] items-center">
          <input type="checkbox" class="size-[14px] shrink-0 appearance-none bg-white ${active ? "shadow-[inset_0_0_0_4px_#0000a0]" : "shadow-[inset_0_0_0_2px_#fff,inset_0_0_0_4px_#000]"}" />
          <span class="mr-[2px] ml-[2px] h-[14px] w-[14px] shrink-0 ${active ? "bg-[#ee1c1c]" : ""}">${active ? '<svg class="size-[14px]" viewBox="0 0 14 14"><path d="M2 2h7L7 4l5 6-2 2-5-6-3 3z" fill="#fff"/></svg>' : ""}</span>
          <span class="flex h-[14px] flex-1 items-center justify-between overflow-hidden pr-[1px] pl-[2px] ${bg}">${name}${active ? '<svg class="size-[6px]" viewBox="0 0 6 6"><path d="M.5.500h5v5h-5zM3 0v6M0 3h6" fill="none" stroke="#000"/></svg>' : ""}</span>
        </label>`;
      }).join("")}</div>`).join("");

    // result categories
    const categories = ["Pad to pad (1160)", "Pad to circuit (1259)", "Circuit to circuit (601)", "Same Net Spacing (156)", "PTH to Copper (732)", "Shaved SMD (34)", "PTH (Comp) Annular ring (246)", "VIA Annular ring (2232)", "Spacing length (167)", "Rout to Copper (199)", "Pads (5345)", "Lines (1028)", "Non standard rotated lines (1)", "Line Neckdown (121)", "Slivers (198)", "SMD Pads (1050)", "SMD Pitch (32)", "SMD Packages (77)", "Conductor width (1300)"];
    document.getElementById("categories").innerHTML = categories.map((c) =>
      c.startsWith("Shaved") ? `<li class="my-[1px] bg-black leading-[16px] text-[#53cfb0]">${c}</li>` : `<li>${c}</li>`).join("");

    // checklist actions
    const checks = [
      ["signal", "Signal Layer Ch", "Inner", 2, "10 layers were processed", true],
      ["ground", "Power/Ground C", "P/G (Mils)", 1, "No power/ground layers processed", false],
      ["signal", "Signal Layer Ch", "Outer", 4, "2 layers were processed", true],
      ["signal", "Solder Mask Ch", "Soldermask", 6, "No soldermask layers were processed", true],
      ["signal", "Silk Screen Ch", "Silkscreen", 3, "10 silkscreen layers processed", true],
    ];
    const raised = "border-2 [border-color:#c9f6f6_#4f8484_#4f8484_#c9f6f6]";
    const raisedGreen = "border-2 bg-[#53cfb0] [border-color:#a5ecd8_#2a7560_#2a7560_#a5ecd8]";
    document.getElementById("checks").innerHTML = checks.map(([icon, name, erf, sec, msg, alert], i) => `
      <article class="h-[119px] border-b-[3px] border-black bg-[#9bdbdb]">
        <div class="flex h-[33px] items-start overflow-hidden pt-[2px] pl-[4px]">
          <span class="relative mt-[4px] size-[13px] shrink-0 border-2 [border-color:#4f8484_#c9f6f6_#c9f6f6_#4f8484]">
            <input type="checkbox" checked aria-label="${name}" class="peer absolute inset-0 appearance-none" />
            <svg class="absolute -top-[2px] -left-[2px] hidden size-[13px] peer-checked:block" viewBox="0 0 13 13"><path d="M3 6l2 5 6-9" fill="none" stroke="#c00850" stroke-width="2"/></svg>
          </span>
          <svg class="mt-[4px] ml-[20px] size-[20px] shrink-0"><use href="#${icon}"/></svg>
          <span class="mt-[4px] ml-[5px] w-[104px] shrink-0 overflow-hidden font-['Liberation_Serif',serif] text-[15px] font-bold whitespace-nowrap">${name}</span>
          <label for="erf${i}" class="h-[29px] w-[43px] shrink-0 pt-[4px] pl-[1px] ${raised}">ERF:</label>
          <input id="erf${i}" value="${erf}" class="ml-[5px] h-[29px] w-[104px] min-w-0 border-2 pb-[8px] pl-[5px] outline-none [border-color:#4f8484_#c9f6f6_#c9f6f6_#4f8484]" />
          <button aria-label="Help" class="ml-[5px] h-[29px] w-[30px] shrink-0 ${raised}"><svg class="size-full"><use href="#help"/></svg></button>
        </div>
        <div class="flex h-[28px] items-center gap-[4px] px-[2px] font-['Liberation_Serif',serif] text-[15px] font-bold">
          <button class="h-[23px] flex-1 leading-[18px] ${raised}">Parameters...</button>
          <button class="h-[23px] flex-1 leading-[18px] ${raised}">Ranges...</button>
          <button class="h-[23px] flex-1 leading-[18px] ${raised}">Online...</button>
        </div>
        <div class="flex h-[35px] items-center">
          <button aria-label="Run" class="ml-[3px] h-[29px] w-[29px] ${raisedGreen}"><svg class="size-full"><use href="#run"/></svg></button>
          <button aria-label="Run on selected" class="ml-[5px] h-[29px] w-[29px] ${raisedGreen}"><svg class="size-full"><use href="#run-sel"/></svg></button>
          <button aria-label="Run in area" class="ml-[5px] h-[29px] w-[29px] ${raisedGreen}"><svg class="size-full"><use href="#run-area"/></svg></button>
          <p class="flex-1 text-center leading-[15px]">02 Mar 2025<br />03:47 PM - 0:00:0${sec}</p>
          <button aria-label="View results" class="mr-[3px] ml-[36px] h-[29px] w-[29px] ${raisedGreen}"><svg class="size-full"><use href="#zoom"/></svg></button>
          <span class="h-[34px] w-[17px] border border-black text-center leading-[30px] font-bold ${alert ? "bg-[#ff1a1a]" : "bg-[#1ee61e]"}">${alert ? '<svg class="mx-auto mt-[9px] h-[12px] w-[8px]" viewBox="0 0 8 12"><path d="M0 0h3L2.500 8H.500zM5 0h3l-.5 8h-2zM0 9h3v2.500H0zM5 9h3v2.500H5z"/></svg>' : ""}</span>
        </div>
        <p class="h-[20px] border-x border-t border-black bg-[#ffffcc] pl-[2px] leading-[18px] whitespace-nowrap">${msg}</p>
      </article>`).join("");

    // histogram
    const bars = [["10-", "11", "10.541", 36], ["11-", "12", "11.818", 40], ["12-", "13", "12.8", 44], ["35-", "36", "35.1", 123]];
    document.getElementById("bars").innerHTML = bars.map(([, , v, h], i) =>
      `<div class="w-[55px] text-center leading-[15px] ${i ? "font-normal" : "text-[#dd1515]"}">${v}<div class="-mr-px border border-b-0 border-black bg-[#b3ffff]" style="height:${h}px"></div></div>`).join("");
    document.getElementById("bins").innerHTML = bars.map(([a, b]) =>
      `<div class="-mr-px w-[56px] border border-black bg-[#b3ffff] pt-[2px]">${a}\n ${b}</div>`).join("");

    // component pads
    const cols = [953, 1047, 1141, 1236, 1330, 1424, 1519, 1613, 1707, 1802, 1896];
    const rows = [
      [88, [0, 1, 2, 3]], [182, [0, 1, 2, 4, 5, 6, 7]], [277, [0, 1, 2, 4]], [371, [0, 1, 2, 4]],
      [465, [0, 1, 2, 4], [0, 1, 2], "bottom"], [560, [0, 1, 2, 4], [0, 1, 2], "both"], [654, [0, 1, 2, 4, 5], [0, 1, 2], "top"],
      [748, [0, 1, 2]], [842, [0, 1, 2, 3, 4, 5], [0, 1, 2, 3], "bottom"], [937, [0, 1, 2, 3, 4, 5], [0, 1, 2, 3], "top"],
      [1031, [0, 1, 2, 3, 4, 5, 6, 7, 8, 9, 10]],
    ];
    let out = "";
    for (const [y, list, cut = [], side] of rows) {
      for (const c of list) {
        const x = cols[c];
        out += `<circle cx="${x}" cy="${y}" r="31" fill="#0ff"/>`;
        if (cut.includes(c) && side !== "top") out += `<path d="M${x - 19} ${y + 25}A31 31 0 0 0 ${x + 19} ${y + 25}z" fill="#fff"/>`;
        if (cut.includes(c) && side !== "bottom") out += `<path d="M${x - 18} ${y - 26}A31 31 0 0 1 ${x + 18} ${y - 26}z" fill="#fff"/>`;
        if (cut.includes(c) && side === "both") out += `<path d="M${x - 24} ${y - 26}q1-4 4-4t5 3v54q-2 3-5 3t-4-4z" fill="#fff"/><path d="M${x - 24} ${y - 19}l4-5 6-2v52l-6-2-4-5z" fill="#f00"/><path d="M${x - 14} ${y - 30}v7M${x - 14} ${y + 23}v7" stroke="#000"/>`;
      }
    }
    out += '<path d="M978 1013q6 10 6 25h-6zM1022 1013q-6 10-6 25h6z" fill="#fff"/><path d="M1303 949q3 8 11 14M1168 949q-3 8-10 13M1210 1017q3-7 9-11M1262 1017q-3-7-9-11" fill="none" stroke="#fff" stroke-width="2"/>';
    document.getElementById("pads").innerHTML = out;
  </script>
</body>
</html>
